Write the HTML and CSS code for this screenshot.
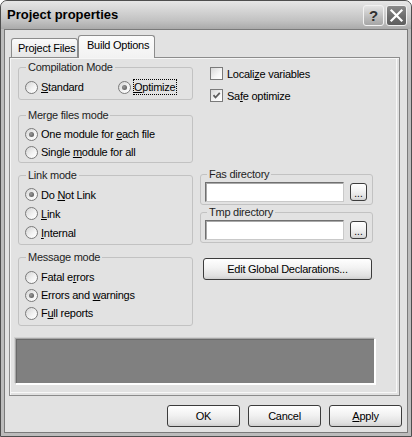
FILE: index.html
```html
<!DOCTYPE html>
<html>
<head>
<meta charset="utf-8">
<title>Project properties</title>
<link rel="stylesheet" href="styles.css">
</head>
<body>
<div class="window">
  <div class="titlebar">
    <span class="title">Project properties</span>
    <div class="caption-btns">
      <span class="cbtn help">?</span>
      <span class="cbtn close"><svg width="19" height="19" viewBox="0 0 19 19"><path d="M4.5 4.5 L14.5 14.5 M14.5 4.5 L4.5 14.5" stroke="#fff" stroke-width="2.2" stroke-linecap="square" fill="none"/></svg></span>
    </div>
  </div>
  <div class="client">
    <div class="tabs">
      <div class="tab">Project Files</div>
      <div class="tab active">Build Options</div>
    </div>
    <div class="panel">
      <div class="cols">
        <div class="col-left">
          <fieldset class="grp g-comp">
            <legend>Compilation Mode</legend>
            <div class="inline-row">
              <label class="opt first"><span class="radio"></span><span><u>S</u>tandard</span></label>
              <label class="opt"><span class="radio on"></span><span class="focus"><u>O</u>ptimize</span></label>
            </div>
          </fieldset>
          <fieldset class="grp g-merge">
            <legend>Merge files mode</legend>
            <label class="opt"><span class="radio on"></span><span>One module for <u>e</u>ach file</span></label>
            <label class="opt"><span class="radio"></span><span>Single <u>m</u>odule for all</span></label>
          </fieldset>
          <fieldset class="grp g-link">
            <legend>Link mode</legend>
            <label class="opt"><span class="radio on"></span><span>Do <u>N</u>ot Link</span></label>
            <label class="opt"><span class="radio"></span><span><u>L</u>ink</span></label>
            <label class="opt"><span class="radio"></span><span><u>I</u>nternal</span></label>
          </fieldset>
          <fieldset class="grp g-msg">
            <legend>Message mode</legend>
            <label class="opt"><span class="radio"></span><span>Fatal e<u>r</u>rors</span></label>
            <label class="opt"><span class="radio on"></span><span>Errors and <u>w</u>arnings</span></label>
            <label class="opt"><span class="radio"></span><span>F<u>u</u>ll reports</span></label>
          </fieldset>
        </div>
        <div class="col-right">
          <label class="chk-row first"><span class="check"></span><span>Locali<u>z</u>e variables</span></label>
          <label class="chk-row"><span class="check"><svg width="11" height="11" viewBox="0 0 11 11"><path d="M2.5 5.2 L4.5 7.5 L8.8 2.8" stroke="#5c5c5c" stroke-width="1.8" fill="none"/></svg></span><span>Sa<u>f</u>e optimize</span></label>
          <fieldset class="grp dir g-fas">
            <legend>Fas directory</legend>
            <div class="dir-row"><span class="field"></span><span class="btn dots">...</span></div>
          </fieldset>
          <fieldset class="grp dir g-tmp">
            <legend>Tmp directory</legend>
            <div class="dir-row"><span class="field"></span><span class="btn dots">...</span></div>
          </fieldset>
          <span class="btn edit">Edit Global Declarations...</span>
        </div>
      </div>
      <div class="output"></div>
    </div>
    <div class="actions">
      <span class="btn act">OK</span>
      <span class="btn act">Cancel</span>
      <span class="btn act"><u>A</u>pply</span>
    </div>
  </div>
</div>
</body>
</html>
```

FILE: styles.css
```css
* { box-sizing: border-box; }

body {
  margin: 0;
  background: #ffffff;
  font-family: "Liberation Sans", Arial, sans-serif;
  font-size: 11px;
  color: #000;
}

u { text-decoration: underline; text-underline-offset: 1px; }

.window {
  width: 412px;
  height: 437px;
  border: 1px solid #4e4e4e;
  border-radius: 7px 7px 0 0;
  background: #bcbcbc;
  display: flex;
  flex-direction: column;
  overflow: hidden;
}

.titlebar {
  flex: none;
  height: 28px;
  display: flex;
  justify-content: space-between;
  align-items: flex-start;
  padding: 0 4px 0 6px;
  background: linear-gradient(#e6e6e6 0%, #d4d4d4 35%, #c2c2c2 70%, #aaaaaa 100%);
}

.title {
  font-weight: bold;
  font-size: 13px;
  line-height: 28px;
  letter-spacing: 0;
}

.caption-btns {
  display: flex;
  gap: 2px;
  padding-top: 4px;
}

.cbtn {
  width: 21px;
  height: 21px;
  border-radius: 3px;
  display: flex;
  align-items: center;
  justify-content: center;
}

.help {
  border: 1px solid #f2f2f2;
  background: linear-gradient(#e4e4e4, #bcbcbc 60%, #a6a6a6);
  color: #303030;
  font-weight: bold;
  font-size: 15px;
  line-height: 19px;
}

.close {
  border: 1px solid #f0f0f0;
  background: linear-gradient(#8a8a8a, #6a6a6a 60%, #5e5e5e);
}

.client {
  flex: 1;
  margin: 0 3px 3px;
  border: 1px solid #7a7a7a;
  background: #e2e2e2;
  letter-spacing: -0.25px;
}

.tabs {
  height: 27px;
  display: flex;
  align-items: flex-end;
  padding-left: 6px;
}

.tab {
  width: 67px;
  height: 19px;
  padding: 1px 0 0 6px;
  line-height: 17px;
  border: 1px solid #8c8c8c;
  border-bottom: none;
  border-radius: 3px 3px 0 0;
  background: linear-gradient(#fafafa, #e6e6e6);
  white-space: nowrap;
}

.tab.active {
  width: 77px;
  height: 23px;
  padding-left: 8px;
  margin-bottom: -1px;
  position: relative;
  z-index: 1;
  background: linear-gradient(#fbfbfb, #f2f2f2);
}

.panel {
  width: 391px;
  height: 339px;
  margin-left: 4px;
  border: 1px solid #8c8c8c;
  background: #e2e2e2;
  box-shadow: inset 1px 1px 0 #f6f6f6, inset -2px -2px 0 #e2e2e2, inset -3px -3px 0 #f8f8f8;
}

.cols {
  display: flex;
  margin: 3px 0 0 8px;
}

.col-left {
  width: 175px;
  display: flex;
  flex-direction: column;
}

.col-right {
  width: 173px;
  margin-left: 7px;
  display: flex;
  flex-direction: column;
  align-items: flex-start;
}

.grp {
  margin: 0;
  min-width: 0;
  border: 1px solid #c2c2c2;
  border-radius: 3px;
  padding: 3px 6px 1px;
}

.grp legend {
  padding: 0 2px;
  margin-left: 1px;
  line-height: 13px;
  color: #1e1e1e;
}

.g-comp { padding: 4px 6px 3px; }
.g-merge { margin-top: 9px; padding: 3px 6px 1px; }
.g-link { margin-top: 6px; padding: 3px 6px 2px; }
.g-link .opt { height: 19px; }
.g-msg { margin-top: 6px; padding: 4px 6px 3px; }

.inline-row { display: flex; }

.opt {
  display: flex;
  align-items: center;
  gap: 3px;
  height: 18px;
  white-space: nowrap;
}

.opt.first { width: 93px; }

.radio {
  flex: none;
  width: 13px;
  height: 13px;
  border-radius: 50%;
  border: 1px solid #7a7a7a;
  background: linear-gradient(135deg, #d4d4d4, #f4f4f4 60%, #ffffff);
  display: flex;
  align-items: center;
  justify-content: center;
}

.radio.on::after {
  content: "";
  width: 5px;
  height: 5px;
  border-radius: 50%;
  background: radial-gradient(circle at 40% 40%, #9a9a9a, #4e4e4e);
}

.focus {
  border: 1px dotted #000;
  padding: 0 1px 0 0;
  line-height: 14px;
  margin-left: -1px;
}

.chk-row {
  display: flex;
  align-items: center;
  gap: 4px;
  height: 21px;
  margin: 1px 0 0 10px;
  white-space: nowrap;
}

.chk-row.first { margin-top: 2px; }

.check {
  flex: none;
  width: 13px;
  height: 13px;
  border: 1px solid #7a7a7a;
  background: linear-gradient(135deg, #d8d8d8, #f6f6f6 60%, #ffffff);
  display: flex;
  align-items: center;
  justify-content: center;
}

.dir {
  width: 173px;
  padding: 1px 4px 2px;
}

.dir legend { margin-left: 2px; }

.g-fas { margin-top: 62px; }
.g-tmp { margin-top: 1px; }

.dir-row {
  display: flex;
  align-items: center;
  gap: 6px;
}

.field {
  width: 139px;
  height: 20px;
  background: #fff;
  border: 1px solid;
  border-color: #707070 #c9c9c9 #c9c9c9 #707070;
  box-shadow: inset 1px 1px 0 #a9a9a9;
}

.btn {
  display: flex;
  align-items: center;
  justify-content: center;
  border: 1px solid #3c3c3c;
  border-radius: 3px;
  background: linear-gradient(#ffffff, #f2f2f2 45%, #e0e0e0 85%, #cfcfcf);
  white-space: nowrap;
}

.dots {
  width: 17px;
  height: 18px;
  line-height: 16px;
  padding-top: 3px;
  letter-spacing: 0;
  font-size: 10px;
}

.edit {
  width: 169px;
  height: 22px;
  margin: 15px 0 0 3px;
}

.output {
  width: 360px;
  height: 46px;
  margin: 12px 0 0 5px;
  background: #808080;
  border: 1px solid;
  border-color: #a6a6a6 #ffffff #ffffff #a6a6a6;
  box-shadow: inset 1px 1px 0 #6a6a6a, -1px -1px 0 #d0d0d0, 1px 1px 0 #ffffff;
}

.actions {
  display: flex;
  justify-content: flex-end;
  gap: 8px;
  margin-top: 9px;
  padding-right: 5px;
}

.act {
  width: 73px;
  height: 22px;
}
```
